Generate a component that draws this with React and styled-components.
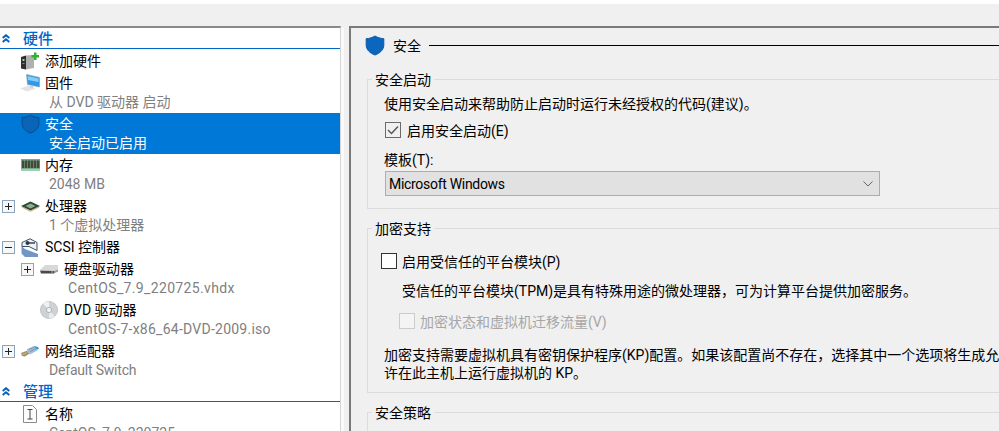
import styled, { createGlobalStyle } from "styled-components";

const UI_FONT = `Roboto, "Noto Sans CJK SC", sans-serif`;

const GlobalStyle = createGlobalStyle`
  html, body {
    margin: 0;
    padding: 0;
    height: 100%;
    overflow: hidden;
    background: #f0f0f0;
  }
  #root {
    height: 100%;
  }
  * {
    box-sizing: border-box;
  }
`;

const Page = styled.div`
  width: 999px;
  height: 431px;
  overflow: hidden;
  display: flex;
  flex-direction: column;
  background: #f0f0f0;
  font-family: ${UI_FONT};
  font-size: 14px;
  color: #000;
`;

const TopStrip = styled.div`
  flex: none;
  height: 4px;
  background: #fff;
`;

const TopBar = styled.div`
  flex: none;
  height: 22px;
  background: #f0f0f0;
`;

const Body = styled.div`
  flex: 1;
  min-height: 0;
  display: flex;
`;

const Sidebar = styled.div`
  flex: none;
  width: 341px;
  background: #fff;
  border-top: 2px solid #8a8a8a;
  border-right: 1px solid #d4d4d4;
  overflow: hidden;
`;

const Track = styled.div`
  flex: none;
  width: 3px;
  margin-top: 2px;
  margin-right: 5px;
  background: #fafafa;
`;

const SectionHead = styled.div`
  height: 21px;
  display: flex;
  align-items: center;
  border-bottom: 1px solid #0066cc;
  color: #0066cc;
  font-size: 15px;
  font-weight: 500;
  padding-left: 2px;
  margin-bottom: 1px;
`;

const HeadLabel = styled.span`
  margin-left: 13px;
  margin-bottom: 2px;
`;

const Item = styled.div`
  display: flex;
  flex-direction: column;
  padding-left: ${(p) => p.$indent || 0}px;
  background: ${(p) => (p.$selected ? "#0078d7" : "transparent")};
  color: ${(p) => (p.$selected ? "#fff" : "#000")};
`;

const ItemRow = styled.div`
  height: 22px;
  display: flex;
  align-items: center;
`;

const ItemLabel = styled.span`
  line-height: 20px;
`;

const ToggleSlot = styled.div`
  flex: none;
  width: 19px;
  padding-left: 2px;
  display: flex;
  align-items: center;
`;

const IconSlot = styled.div`
  flex: none;
  width: 26px;
  height: 22px;
  padding-right: 4px;
  display: flex;
  align-items: center;
  justify-content: center;
`;

const SubText = styled.div`
  height: 19px;
  line-height: 17px;
  margin-left: 49px;
  white-space: nowrap;
  letter-spacing: ${(p) => p.$spread || 0}px;
  color: ${(p) => (p.$selected ? "#fff" : "#808080")};
`;

const Main = styled.div`
  flex: 1;
  min-width: 0;
  border-top: 2px solid #7a7a7a;
  border-left: 2px solid #7a7a7a;
  overflow: hidden;
  padding-left: 16px;
`;

const TitleRow = styled.div`
  height: 34px;
  display: flex;
  align-items: center;
  margin-bottom: 7px;
`;

const TitleIcon = styled.div`
  display: flex;
  margin-left: -2px;
`;

const TitleText = styled.span`
  margin-left: 8px;
`;

const TitleRule = styled.div`
  flex: 1;
  height: 1px;
  background: #000;
  margin-left: 8px;
`;

const Group = styled.fieldset`
  margin: 0 0 9px;
  width: 700px;
  height: ${(p) => p.$h}px;
  padding: 0;
  border: 1px solid #dcdcdc;
`;

const Legend = styled.legend`
  margin-left: 4px;
  padding: 0 3px;
  height: 20px;
  line-height: 22px;
`;

const Line = styled.div`
  height: ${(p) => p.$h || 20}px;
  line-height: ${(p) => p.$h || 20}px;
  margin-left: ${(p) => p.$left}px;
  margin-top: ${(p) => p.$top || 0}px;
  white-space: nowrap;
`;

const CheckRow = styled.label`
  display: flex;
  align-items: center;
  gap: ${(p) => p.$gap || 5}px;
  height: 20px;
  margin-left: ${(p) => p.$left}px;
  margin-top: ${(p) => p.$top || 0}px;
  white-space: nowrap;
  color: ${(p) => (p.$disabled ? "#a6a6a6" : "#000")};
`;

const Box = styled.span`
  flex: none;
  width: 16px;
  height: 16px;
  border: 1px solid ${(p) => (p.$disabled ? "#cccccc" : p.$checked ? "#6b6b6b" : "#333")};
  background: ${(p) => (p.$disabled ? "#f4f4f4" : p.$checked ? "transparent" : "#fff")};
  display: flex;
  align-items: center;
  justify-content: center;
`;

const Select = styled.div`
  width: 495px;
  height: 25px;
  margin-left: 17px;
  margin-top: 1px;
  padding: 0 6px 0 3px;
  display: flex;
  align-items: center;
  justify-content: space-between;
  letter-spacing: -0.3px;
  background: #e1e1e1;
  border: 1px solid #adadad;
`;

const ShieldIcon = ({ size = 20, dark }) => (
  <svg width={size} height={size + 1} viewBox="0 0 20 21">
    <path
      d="M10 1 C7.5 2.6 4.5 3.5 1.2 3.7 V10 C1.2 14.8 5 18.2 10 20 C15 18.2 18.8 14.8 18.8 10 V3.7 C15.5 3.5 12.5 2.6 10 1 Z"
      fill={dark ? "#0a64b8" : "#0a67bd"}
      stroke={dark ? "#0b4a85" : "#0a5aa6"}
      strokeWidth="1"
    />
  </svg>
);

const Chevrons = () => (
  <svg width="8" height="9" viewBox="0 0 8 9" fill="none" stroke="#0060c0" strokeWidth="1.9">
    <path d="M0.7 4 L4 1.2 L7.3 4" />
    <path d="M0.7 8 L4 5.2 L7.3 8" />
  </svg>
);

const Toggle = ({ open }) => (
  <svg width="13" height="13" viewBox="0 0 13 13">
    <rect x="0.5" y="0.5" width="12" height="12" fill="#f7f7f7" stroke="#8ba3bd" />
    <path d={open ? "M3 6.5 H10" : "M3 6.5 H10 M6.5 3 V10"} stroke="#222" strokeWidth="1" fill="none" />
  </svg>
);

const AddHardwareIcon = () => (
  <svg width="18" height="18" viewBox="0 0 18 18">
    <path d="M0 5 L5 3.5 V17.5 L0 16.5 Z" fill="#2f2f2f" />
    <path d="M5 3.5 L13 3 V16 L5 17.5 Z" fill="#b0b0b0" />
    <rect x="1.5" y="7" width="2" height="2" fill="#9ad89a" />
    <rect x="1.5" y="11" width="2" height="1" fill="#8a8a8a" />
    <path d="M10.5 3 H13 V0.5 H15.5 V3 H18 V5.5 H15.5 V8 H13 V5.5 H10.5 Z" fill="#2fb12f" />
  </svg>
);

const MonitorIcon = () => (
  <svg width="21" height="18" viewBox="0 0 21 18">
    <path d="M6.5 0.5 L19.5 3.5 V13 L7.5 10.5 Z" fill="#2f9be8" stroke="#8a9aa8" strokeWidth="0.6" />
    <path d="M7.5 2 L18.5 4.5 V8 L8 6 Z" fill="#86cdf5" />
    <path d="M0 14.5 L9 11.5 L16 14.5 L7 17.5 Z" fill="#e4e4e4" />
    <path d="M10 11 L13 12 V14 L10 13.5 Z" fill="#cfcfcf" />
  </svg>
);

const MemoryIcon = () => (
  <svg width="19" height="12" viewBox="0 0 19 12">
    <rect x="0" y="0" width="19" height="12" fill="#6fb08c" />
    <rect x="0" y="10" width="19" height="2" fill="#a3ccb4" />
    {[1, 4, 7, 10, 13, 16].map((x) => (
      <rect key={x} x={x} y="1.5" width="2.4" height="7.5" fill="#4a4638" />
    ))}
  </svg>
);

const ChipIcon = () => (
  <svg width="19" height="11" viewBox="0 0 19 11">
    <path d="M0 5 L9.5 0.5 L19 5 L9.5 9.5 Z" fill="#2d4a35" />
    <path d="M4.5 5 L9.5 2.5 L14.5 5 L9.5 7.5 Z" fill="#8fae94" />
    <path d="M1 6 L9.5 10.2 L18 6" fill="none" stroke="#b9a36a" strokeWidth="1" />
  </svg>
);

const ControllerIcon = () => (
  <svg width="18" height="19" viewBox="0 0 18 19">
    <path d="M0.5 8 L4 11 L17 16 V19 H4 L0.5 15.5 Z" fill="#6f96c4" />
    <path d="M1 4.5 L9 0.8 L16 4.5 V12.5 L8 8.5 L1 8.5 Z" fill="#eef2f7" stroke="#3d4f66" strokeWidth="1" />
    <circle cx="6.5" cy="5" r="2" fill="#2b3a4d" />
    <path d="M8 5 H14" stroke="#2b3a4d" strokeWidth="1.4" />
  </svg>
);

const DiskIcon = () => (
  <svg width="18" height="10" viewBox="0 0 18 10">
    <path d="M0 6 L5 1 H18 V5.5 L14 7 Z" fill="#d8d8d8" />
    <path d="M0 6.5 L14 7 V9.5 H1 Z" fill="#4a4a4a" />
    <path d="M14 7 L18 5.5 V7.5 L14 9.5 Z" fill="#9a9a9a" />
    <rect x="11" y="7.5" width="2" height="1" fill="#7fd07f" />
  </svg>
);

const DiscIcon = () => (
  <svg width="18" height="18" viewBox="0 0 18 18">
    <circle cx="9" cy="9" r="8.6" fill="#cfd2d5" stroke="#b0b3b6" strokeWidth="0.6" />
    <path d="M9 9 L3 2.5 A8.6 8.6 0 0 1 9 0.4 Z" fill="#eef0f2" />
    <path d="M9 9 L15 15.5 A8.6 8.6 0 0 1 9 17.6 Z" fill="#e8eaec" />
    <circle cx="9" cy="9" r="2.6" fill="#f4f4f4" stroke="#a0a3a6" strokeWidth="0.8" />
  </svg>
);

const NetworkIcon = () => (
  <svg width="18" height="11" viewBox="0 0 18 11">
    <path d="M0 7 L8 4 L11 6 L4 10.5 L1 10 Z" fill="#8f8f8f" />
    <path d="M1 7.5 L6 6 V8 L1.5 9.5 Z" fill="#c8a84a" />
    <path d="M6 3 L13 0 L17 1.5 V4 L9 8.5 L6 6 Z" fill="#a4bdd3" />
    <path d="M8 3.5 L13 1.5 M9 5.5 L14.5 3" stroke="#6f8ba5" strokeWidth="0.8" fill="none" />
    <path d="M13 0 L17 1 L18 3 L15 3 Z" fill="#2f9be8" />
  </svg>
);

const NameIcon = () => (
  <svg width="14" height="18" viewBox="0 0 14 18" fill="none">
    <path d="M0.5 0.5 H9.5 L13.5 4.5 V17.5 H0.5 Z" fill="#fdfdfd" stroke="#8c8c8c" />
    <path d="M4.5 4.5 H9.5 M7 4.5 V14 M4.5 14 H9.5" stroke="#444" strokeWidth="1" />
  </svg>
);

const CheckMark = () => (
  <svg width="12" height="10" viewBox="0 0 12 10" fill="none" stroke="#555" strokeWidth="1.4">
    <path d="M1 5 L4.5 8.5 L11 1.5" />
  </svg>
);

const ChevronDown = () => (
  <svg width="10" height="6" viewBox="0 0 10 6" fill="none" stroke="#666" strokeWidth="1">
    <path d="M0.5 0.5 L5 5 L9.5 0.5" />
  </svg>
);

const tree = [
  { label: "添加硬件", icon: <AddHardwareIcon /> },
  { label: "固件", sub: "从 DVD 驱动器 启动", icon: <MonitorIcon /> },
  { label: "安全", sub: "安全启动已启用", icon: <ShieldIcon dark size={19} />, selected: true },
  { label: "内存", sub: "2048 MB", icon: <MemoryIcon /> },
  { label: "处理器", sub: "1 个虚拟处理器", icon: <ChipIcon />, toggle: "plus" },
  { label: "SCSI 控制器", icon: <ControllerIcon />, toggle: "minus" },
  { label: "硬盘驱动器", sub: "CentOS_7.9_220725.vhdx", spread: 0.35, icon: <DiskIcon />, toggle: "plus", indent: 19 },
  { label: "DVD 驱动器", sub: "CentOS-7-x86_64-DVD-2009.iso", spread: 0.25, icon: <DiscIcon />, indent: 19 },
  { label: "网络适配器", sub: "Default Switch", spread: -0.2, icon: <NetworkIcon />, toggle: "plus" },
];

const TreeItem = ({ label, sub, spread, icon, toggle, indent, selected }) => (
  <Item $selected={selected} $indent={indent}>
    <ItemRow>
      <ToggleSlot>{toggle && <Toggle open={toggle === "minus"} />}</ToggleSlot>
      <IconSlot>{icon}</IconSlot>
      <ItemLabel>{label}</ItemLabel>
    </ItemRow>
    {sub && <SubText $selected={selected} $spread={spread}>{sub}</SubText>}
  </Item>
);

const App = () => (
  <>
    <GlobalStyle />
    <Page>
      <TopStrip />
      <TopBar />
      <Body>
        <Sidebar>
          <SectionHead>
            <Chevrons />
            <HeadLabel>硬件</HeadLabel>
          </SectionHead>
          {tree.map((item) => (
            <TreeItem key={item.label} {...item} />
          ))}
          <SectionHead>
            <Chevrons />
            <HeadLabel>管理</HeadLabel>
          </SectionHead>
          <TreeItem label="名称" sub="CentOS_7.9_220725" icon={<NameIcon />} />
        </Sidebar>
        <Track />
        <Main>
          <TitleRow>
            <TitleIcon>
              <ShieldIcon />
            </TitleIcon>
            <TitleText>安全</TitleText>
            <TitleRule />
          </TitleRow>
          <Group $h={140}>
            <Legend>安全启动</Legend>
            <Line $left={16} $top={5}>使用安全启动来帮助防止启动时运行未经授权的代码(建议)。</Line>
            <CheckRow $left={17} $top={6} $gap={6}>
              <Box $checked>
                <CheckMark />
              </Box>
              启用安全启动(E)
            </CheckRow>
            <Line $left={16} $top={10}>模板(T):</Line>
            <Select>
              Microsoft Windows
              <ChevronDown />
            </Select>
          </Group>
          <Group $h={175}>
            <Legend>加密支持</Legend>
            <CheckRow $left={13} $top={13}>
              <Box />
              启用受信任的平台模块(P)
            </CheckRow>
            <Line $left={34} $top={10}>受信任的平台模块(TPM)是具有特殊用途的微处理器，可为计算平台提供加密服务。</Line>
            <CheckRow $left={31} $top={10} $disabled>
              <Box $disabled />
              加密状态和虚拟机迁移流量(V)
            </CheckRow>
            <Line $left={16} $top={16} $h={17}>加密支持需要虚拟机具有密钥保护程序(KP)配置。如果该配置尚不存在，选择其中一个选项将生成允</Line>
            <Line $left={16} $h={18}>许在此主机上运行虚拟机的 KP。</Line>
          </Group>
          <Group $h={60}>
            <Legend>安全策略</Legend>
            <Line $left={16} $top={6}>指定此虚拟机的其他保护选项。</Line>
          </Group>
        </Main>
      </Body>
    </Page>
  </>
);

export default App;
